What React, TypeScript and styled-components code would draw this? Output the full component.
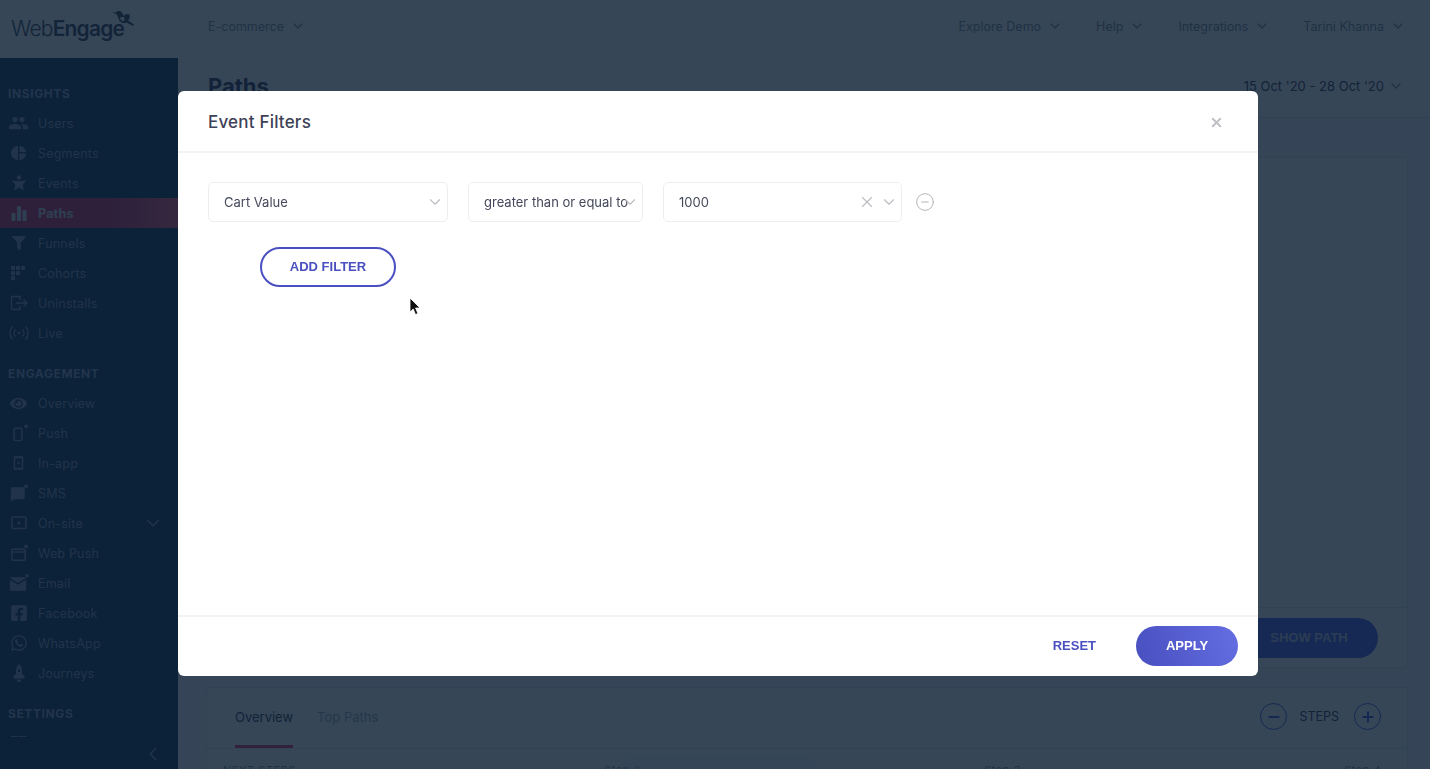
import React from 'react';
import styled, { createGlobalStyle } from 'styled-components';
import { ChevronDown, ChevronLeft, CircleMinus, Minus, Plus, X } from 'lucide-react';
import { FaEye, FaFacebookSquare, FaFilter, FaWhatsapp } from 'react-icons/fa';
import { MdPeople } from 'react-icons/md';

const GlobalStyle = createGlobalStyle`
  html, body {
    margin: 0;
    height: 100%;
    overflow: hidden;
    background: #fff;
    font-family: Inter, "Liberation Sans", sans-serif;
  }
  * { box-sizing: border-box; }
`;

const Page = styled.div`
  height: 769px;
  display: flex;
  flex-direction: column;
  overflow: hidden;
  background: #fff;
`;

const TopBar = styled.header`
  height: 58px;
  flex-shrink: 0;
  padding-bottom: 6px;
  display: flex;
  align-items: center;
  background: #fff;
  color: #8b9099;
  font-size: 12.5px;
`;
const LogoBox = styled.div`
  width: 208px;
  margin-top: 4px;
  padding-left: 11px;
  display: flex;
  align-items: center;
  position: relative;
  color: #454a60;
  font-size: 21px;
  letter-spacing: -0.8px;
`;
const LogoThin = styled.span`
  font-weight: 300;
`;
const LogoBold = styled.span`
  font-weight: 600;
`;
const Bird = styled.svg`
  position: absolute;
  left: 112px;
  top: -6px;
`;
const TopMenu = styled.div<{ $push?: boolean }>`
  display: flex;
  align-items: center;
  gap: 6px;
  margin-left: ${(p) => (p.$push ? 'auto' : '0')};
  margin-right: 33px;
  &:last-child {
    margin-right: 24px;
  }
`;

const Body = styled.div`
  flex: 1;
  min-height: 0;
  display: flex;
`;

const Sidebar = styled.aside`
  width: 178px;
  flex-shrink: 0;
  display: flex;
  flex-direction: column;
  background: #24405a;
`;
const NavScroll = styled.nav`
  flex: 1;
  min-height: 0;
  overflow: hidden;
  padding-top: 20px;
`;
const SectionTitle = styled.div`
  height: 30px;
  padding-left: 8px;
  display: flex;
  align-items: center;
  font-size: 12px;
  font-weight: 700;
  letter-spacing: 0.6px;
  color: #95a0c8;
  &:not(:first-child) {
    margin-top: 10px;
  }
`;
const NavRow = styled.div<{ $active?: boolean }>`
  height: 30px;
  display: flex;
  align-items: center;
  gap: 9px;
  padding-left: 8px;
  padding-right: 14px;
  font-size: 12.5px;
  letter-spacing: 0.2px;
  font-weight: ${(p) => (p.$active ? 700 : 400)};
  color: ${(p) => (p.$active ? '#d5dbea' : '#8f9cc0')};
  background: ${(p) =>
    p.$active ? 'linear-gradient(90deg, #d2386c 0 62%, #f7607c 100%)' : 'transparent'};
`;
const NavIcon = styled.span`
  width: 21px;
  height: 20px;
  flex-shrink: 0;
  display: flex;
  align-items: center;
  justify-content: center;
`;
const NavArrow = styled.span`
  margin-left: auto;
  display: flex;
`;
const CollapseBar = styled.div`
  height: 32px;
  flex-shrink: 0;
  padding-right: 14px;
  display: flex;
  align-items: center;
  justify-content: flex-end;
  background: #24405a;
  border-top: 1px solid #1c3650;
  color: #8f9cc0;
`;

const Main = styled.main`
  flex: 1;
  min-width: 0;
  padding: 0 22px 0 28px;
  background: #f8f8fb;
`;
const TitleRow = styled.div`
  height: 60px;
  margin: 0 -22px 39px -28px;
  padding: 0 26px 4px 30px;
  display: flex;
  align-items: center;
  justify-content: space-between;
  border-bottom: 1px solid #e4e7ec;
  background: #fff;
`;
const PageTitle = styled.h1`
  margin: 0;
  font-size: 22px;
  font-weight: 700;
  color: #46415a;
`;
const DateRange = styled.div`
  display: flex;
  align-items: center;
  gap: 4px;
  font-size: 13px;
  color: #46415a;
  svg {
    color: #8b9099;
  }
`;
const Card = styled.section<{ $height: number }>`
  height: ${(p) => p.$height}px;
  display: flex;
  flex-direction: column;
  justify-content: flex-end;
  background: #fff;
  border: 1px solid #e3e6eb;
  border-radius: 3px;
`;
const CardFoot = styled.div`
  height: 60px;
  padding-right: 29px;
  display: flex;
  align-items: center;
  justify-content: flex-end;
  border-top: 1px solid #e3e6eb;
`;
const ShowPath = styled.button`
  width: 138px;
  height: 40px;
  border: 0;
  border-radius: 20px;
  background: #5068ee;
  color: #c3cae6;
  font-family: "Liberation Sans", sans-serif;
  font-size: 13px;
  font-weight: 700;
`;
const TabsCard = styled.section`
  position: relative;
  margin-top: 19px;
  height: 100px;
  background: #fff;
  border: 1px solid #e3e6eb;
  border-radius: 3px;
`;
const TabsHead = styled.div`
  height: 61px;
  padding: 0 26px 0 28px;
  display: flex;
  border-bottom: 1px solid #e3e6eb;
`;
const Tab = styled.div<{ $active?: boolean }>`
  height: 60px;
  margin-right: 24px;
  padding-top: 21px;
  font-size: 13px;
  color: ${(p) => (p.$active ? '#46415a' : '#a1abc0')};
  border-bottom: 3px solid ${(p) => (p.$active ? '#e63a70' : 'transparent')};
`;
const Steps = styled.div`
  margin-left: auto;
  padding-bottom: 3px;
  display: flex;
  align-items: center;
  gap: 12px;
  font-size: 12.5px;
  color: #46415a;
`;
const StepButton = styled.span`
  width: 27px;
  height: 27px;
  border: 1.5px solid #4a62e0;
  border-radius: 50%;
  display: flex;
  align-items: center;
  justify-content: center;
  color: #4a62e0;
  &:last-child {
    margin-left: 3px;
  }
`;
const StepsRow = styled.div`
  height: 40px;
  padding: 14px 0 0 16px;
  display: grid;
  grid-template-columns: 381px 380px 360px 1fr;
  font-size: 11px;
  letter-spacing: 0.6px;
  color: #8f97a8;
`;
const FloatingPill = styled.div`
  position: absolute;
  left: 413px;
  top: 67px;
  width: 197px;
  height: 50px;
  border-radius: 16px;
  background: rgba(218, 240, 255, 0.3);
`;

const Overlay = styled.div`
  position: fixed;
  inset: 0;
  padding: 91px 172px 93px 178px;
  display: flex;
  background: rgba(8, 27, 48, 0.81);
`;
const Modal = styled.div`
  flex: 1;
  display: flex;
  flex-direction: column;
  background: #fff;
  border-radius: 6px;
`;
const ModalHead = styled.div`
  height: 62px;
  flex-shrink: 0;
  padding: 2px 34px 0 30px;
  display: flex;
  align-items: center;
  justify-content: space-between;
  border-bottom: 2px solid #f3f3f4;
  color: #c0c0c4;
`;
const ModalTitle = styled.h2`
  margin: 0;
  font-size: 17px;
  font-weight: 500;
  letter-spacing: 0.2px;
  color: #3d4257;
`;
const ModalBody = styled.div`
  flex: 1;
  padding: 29px 30px 0;
`;
const FilterRow = styled.div`
  display: flex;
  align-items: center;
  gap: 20px;
`;
const Select = styled.div<{ $width: number }>`
  width: ${(p) => p.$width}px;
  height: 40px;
  padding: 0 3px 0 15px;
  display: flex;
  align-items: center;
  border: 1px solid #eeeeef;
  border-radius: 5px;
  font-size: 13px;
  color: #44485a;
  white-space: nowrap;
`;
const SelectText = styled.span`
  flex: 1;
  min-width: 0;
`;
const SelectIcons = styled.span`
  display: flex;
  align-items: center;
  gap: 4px;
  color: #bcbcc2;
`;
const RemoveFilter = styled.span`
  display: flex;
  margin-left: -7px;
  color: #b5b5ba;
`;
const AddRow = styled.div`
  width: 240px;
  margin-top: 25px;
  display: flex;
  justify-content: center;
`;
const OutlineButton = styled.button`
  width: 136px;
  height: 40px;
  padding: 0 0 2px;
  border: 2px solid #4a50c0;
  border-radius: 20px;
  background: #fff;
  color: #4a50c0;
  font-family: "Liberation Sans", sans-serif;
  font-size: 13px;
  font-weight: 700;
`;
const ModalFoot = styled.div`
  height: 61px;
  flex-shrink: 0;
  padding: 0 20px 2px 0;
  display: flex;
  align-items: center;
  justify-content: flex-end;
  gap: 40px;
  border-top: 2px solid #f3f3f4;
`;
const TextButton = styled.button`
  padding: 0;
  border: 0;
  background: none;
  color: #4a50c0;
  font-family: "Liberation Sans", sans-serif;
  font-size: 13px;
  font-weight: 700;
`;
const ApplyButton = styled.button`
  width: 102px;
  height: 40px;
  border: 0;
  border-radius: 20px;
  background: linear-gradient(70deg, #484fbf, #656fe2);
  color: #fff;
  font-family: "Liberation Sans", sans-serif;
  font-size: 13px;
  font-weight: 700;
`;
const Pointer = styled.svg`
  position: absolute;
  left: 409px;
  top: 297px;
`;

const Dot = () => <circle cx="19" cy="3" r="2" fill="currentColor" stroke="none" />;

const Bars = () => (
  <svg width="16" height="16" viewBox="0 0 16 16" fill="currentColor">
    <rect x="0.5" y="8" width="4" height="8" rx="1" />
    <rect x="6" y="1" width="4" height="15" rx="1" />
    <rect x="11.5" y="5" width="4" height="11" rx="1" />
  </svg>
);
const Pie = () => (
  <svg width="16" height="16" viewBox="0 0 16 16" fill="currentColor">
    <path d="M7 1v14A7 7 0 0 1 7 1z" />
    <path d="M8.500 1A6.500 6.500 0 0 1 15 7H8.500z" />
    <path d="M8.500 8.500H15A6.500 6.500 0 0 1 8.500 15z" />
  </svg>
);
const StarPerson = () => (
  <svg width="16" height="16" viewBox="0 0 16 16" fill="currentColor">
    <circle cx="8" cy="2.500" r="2.200" />
    <path d="M0.500 5.500 6 6h4l5.500-.5-3.800 4.200L13 15.500 8 12.500l-5 3 1.300-5.800z" />
  </svg>
);
const Cohorts = () => (
  <svg width="15" height="15" viewBox="0 0 15 15" fill="currentColor">
    {[
      [0, 0], [5, 0], [10, 0], [0, 5], [5, 5], [0, 10],
    ].map(([x, y]) => (
      <rect key={`${x}-${y}`} x={x} y={y} width="4" height="4" rx="0.5" />
    ))}
  </svg>
);
const Account = () => (
  <svg width="15" height="14" viewBox="0 0 15 14" fill="currentColor">
    <rect x="0" y="0" width="7" height="6" rx="0.5" />
    <rect x="8" y="0" width="7" height="6" rx="0.5" />
    <rect x="0" y="8" width="7" height="6" rx="0.5" />
    <rect x="8" y="8" width="7" height="6" rx="0.5" />
  </svg>
);
const Uninstall = () => (
  <svg width="18" height="16" viewBox="0 0 18 16" fill="none" stroke="currentColor" strokeWidth="1.400">
    <path d="M10 5V1.500H2.500a1 1 0 0 0-1 1v11a1 1 0 0 0 1 1H10V11" />
    <path d="M6 8h11M13.500 4.500 17 8l-3.500 3.500" />
  </svg>
);
const Live = () => (
  <svg width="20" height="16" viewBox="0 0 20 16" fill="none" stroke="currentColor" strokeWidth="1.300">
    <circle cx="10" cy="8" r="1.200" fill="currentColor" stroke="none" />
    <path d="M6.500 4.500a5 5 0 0 0 0 7M13.500 4.500a5 5 0 0 1 0 7M3.500 1.500a9.500 9.500 0 0 0 0 13M16.500 1.500a9.500 9.500 0 0 1 0 13" />
  </svg>
);
const Phone = () => (
  <svg width="22" height="20" viewBox="0 0 22 20" fill="none" stroke="currentColor" strokeWidth="1.500">
    <rect x="6.500" y="5" width="8" height="13" rx="1.500" />
    <Dot />
  </svg>
);
const InApp = () => (
  <svg width="22" height="20" viewBox="0 0 22 20" fill="currentColor">
    <path fillRule="evenodd" d="M7 3h8a1 1 0 0 1 1 1v12a1 1 0 0 1-1 1H7a1 1 0 0 1-1-1V4a1 1 0 0 1 1-1zm.500 2v10h7V5z" />
    <circle cx="11" cy="10" r="1.200" />
  </svg>
);
const Sms = () => (
  <svg width="22" height="20" viewBox="0 0 22 20" fill="currentColor">
    <path d="M4 4h12a1.500 1.500 0 0 1 1.500 1.500V15a1.500 1.500 0 0 1-1.500 1.500H7L3 19V5a1 1 0 0 1 1-1z" />
    <Dot />
  </svg>
);
const OnSite = () => (
  <svg width="18" height="16" viewBox="0 0 18 16" fill="none" stroke="currentColor" strokeWidth="1.500">
    <rect x="2" y="2" width="14" height="11.500" rx="1" />
    <circle cx="9" cy="8" r="1.500" fill="currentColor" stroke="none" />
  </svg>
);
const WebPush = () => (
  <svg width="22" height="20" viewBox="0 0 22 20" fill="none" stroke="currentColor" strokeWidth="1.500">
    <rect x="4" y="6" width="14" height="11.500" rx="1" />
    <path d="M4 9h14" />
    <Dot />
  </svg>
);
const Mail = () => (
  <svg width="22" height="20" viewBox="0 0 22 20" fill="currentColor">
    <path d="M3 4h15a1 1 0 0 1 1 .7l-8.500 5.300L2 4.700A1 1 0 0 1 3 4z" />
    <path d="M2 6.500l8.500 5.300L19 6.500V17a1 1 0 0 1-1 1H3a1 1 0 0 1-1-1z" />
    <circle cx="20" cy="2.500" r="1.800" />
  </svg>
);
const Rocket = () => (
  <svg width="12" height="18" viewBox="0 0 12 18" fill="currentColor">
    <path fillRule="evenodd" d="M6 0c2 1.500 3 4 3 6.500v3.500l2.500 2v2.500H.5V12L3 10V6.500C3 4 4 1.500 6 0zm0 5.500A1.300 1.300 0 1 0 6 8.100 1.300 1.300 0 0 0 6 5.500z" />
    <rect x="4" y="15.500" width="4" height="2.500" rx="1" />
  </svg>
);

const NAV = [
  {
    title: 'INSIGHTS',
    items: [
      { label: 'Users', icon: <MdPeople size={24} /> },
      { label: 'Segments', icon: <Pie /> },
      { label: 'Events', icon: <StarPerson /> },
      { label: 'Paths', icon: <Bars />, active: true },
      { label: 'Funnels', icon: <FaFilter size={14} /> },
      { label: 'Cohorts', icon: <Cohorts /> },
      { label: 'Uninstalls', icon: <Uninstall /> },
      { label: 'Live', icon: <Live /> },
    ],
  },
  {
    title: 'ENGAGEMENT',
    items: [
      { label: 'Overview', icon: <FaEye size={17} /> },
      { label: 'Push', icon: <Phone /> },
      { label: 'In-app', icon: <InApp /> },
      { label: 'SMS', icon: <Sms /> },
      { label: 'On-site', icon: <OnSite />, arrow: true },
      { label: 'Web Push', icon: <WebPush /> },
      { label: 'Email', icon: <Mail /> },
      { label: 'Facebook', icon: <FaFacebookSquare size={18} /> },
      { label: 'WhatsApp', icon: <FaWhatsapp size={18} /> },
      { label: 'Journeys', icon: <Rocket /> },
    ],
  },
  { title: 'SETTINGS', items: [{ label: '', icon: <Account /> }] },
];

function App() {
  return (
    <Page>
      <GlobalStyle />
      <TopBar>
        <LogoBox>
          <LogoThin>Web</LogoThin>
          <LogoBold>Engage</LogoBold>
          <Bird width="23" height="18" viewBox="0 0 23 18" fill="currentColor">
            <path
              fillRule="evenodd"
              d="M0 2l4 .5C5 .5 8 .5 9.500 2L12 6c1-2 4-3 5.500-1 1 2 0 4-1.500 5.500l6 4-1 1.500-6.500-3.500C12 14 8.500 13 7 10L5 4.500zM10 7.500c-.8-.8-2-.2-1.800 1 .2 1 1.500 2.200 3 3 1-1 1.600-2.500 1.200-3.500-.4-1-1.700-1.200-2.400-.5z"
            />
          </Bird>
        </LogoBox>
        <TopMenu>
          E-commerce <ChevronDown size={16} />
        </TopMenu>
        <TopMenu $push>
          Explore Demo <ChevronDown size={16} />
        </TopMenu>
        <TopMenu>
          Help <ChevronDown size={16} />
        </TopMenu>
        <TopMenu>
          Integrations <ChevronDown size={16} />
        </TopMenu>
        <TopMenu>
          Tarini Khanna <ChevronDown size={16} />
        </TopMenu>
      </TopBar>
      <Body>
        <Sidebar>
          <NavScroll>
            {NAV.map((group) => (
              <React.Fragment key={group.title}>
                <SectionTitle>{group.title}</SectionTitle>
                {group.items.map((item) => (
                  <NavRow key={item.label} $active={'active' in item && item.active}>
                    <NavIcon>{item.icon}</NavIcon>
                    {item.label}
                    {'arrow' in item && item.arrow && (
                      <NavArrow>
                        <ChevronDown size={22} strokeWidth={1.6} />
                      </NavArrow>
                    )}
                  </NavRow>
                ))}
              </React.Fragment>
            ))}
          </NavScroll>
          <CollapseBar>
            <ChevronLeft size={22} strokeWidth={1.6} />
          </CollapseBar>
        </Sidebar>
        <Main>
          <TitleRow>
            <PageTitle>Paths</PageTitle>
            <DateRange>
              15 Oct '20 - 28 Oct '20 <ChevronDown size={16} />
            </DateRange>
          </TitleRow>
          <Card $height={511}>
            <CardFoot>
              <ShowPath>SHOW PATH</ShowPath>
            </CardFoot>
          </Card>
          <TabsCard>
            <TabsHead>
              <Tab $active>Overview</Tab>
              <Tab>Top Paths</Tab>
              <Steps>
                <StepButton>
                  <Minus size={16} strokeWidth={3} />
                </StepButton>
                STEPS
                <StepButton>
                  <Plus size={16} strokeWidth={3} />
                </StepButton>
              </Steps>
            </TabsHead>
            <StepsRow>
              <span>NEXT STEPS</span>
              <span>Step 2</span>
              <span>Step 3</span>
              <span>Step 4</span>
            </StepsRow>
            <FloatingPill />
          </TabsCard>
        </Main>
      </Body>
      <Overlay>
        <Modal>
          <ModalHead>
            <ModalTitle>Event Filters</ModalTitle>
            <X size={15} strokeWidth={3} />
          </ModalHead>
          <ModalBody>
            <FilterRow>
              <Select $width={240}>
                <SelectText>Cart Value</SelectText>
                <SelectIcons>
                  <ChevronDown size={18} strokeWidth={1.5} />
                </SelectIcons>
              </Select>
              <Select $width={175}>
                <SelectText>greater than or equal to</SelectText>
                <SelectIcons>
                  <ChevronDown size={18} strokeWidth={1.5} />
                </SelectIcons>
              </Select>
              <Select $width={239}>
                <SelectText>1000</SelectText>
                <SelectIcons>
                  <X size={18} strokeWidth={1.5} />
                  <ChevronDown size={18} strokeWidth={1.5} />
                </SelectIcons>
              </Select>
              <RemoveFilter>
                <CircleMinus size={20} strokeWidth={1.2} />
              </RemoveFilter>
            </FilterRow>
            <AddRow>
              <OutlineButton>ADD FILTER</OutlineButton>
            </AddRow>
          </ModalBody>
          <ModalFoot>
            <TextButton>RESET</TextButton>
            <ApplyButton>APPLY</ApplyButton>
          </ModalFoot>
        </Modal>
        <Pointer width="12" height="19" viewBox="0 0 12 19">
          <path d="M1 1v14l3.200-3 2.300 5.500 2.400-1L6.600 11H11z" fill="#111" stroke="#fff" strokeWidth="0.8" />
        </Pointer>
      </Overlay>
    </Page>
  );
}

export default App;
